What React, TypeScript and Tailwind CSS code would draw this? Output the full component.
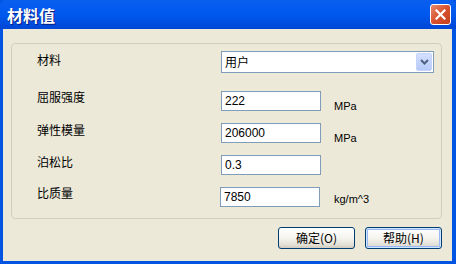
import React from 'react';

const cjk = "font-['Noto_Sans_CJK_SC',sans-serif]";
const latin = "font-['Liberation_Sans','Noto_Sans_CJK_SC',sans-serif]";

function Field({ value, shift = '' }: { value: string; shift?: string }) {
  return (
    <div className={`w-[100px] h-[20px] border border-[#7F9DB9] bg-white px-[3px] flex items-center text-[12px] text-black ${latin} ${shift}`}>
      {value}
    </div>
  );
}

function XpButton({ label, focused }: { label: string; focused?: boolean }) {
  return (
    <div
      className={`w-[77px] h-[22px] rounded-[3px] border border-[#003C74] bg-gradient-to-b from-[#FFFFFF] via-[#F5F4EF] to-[#D9D6CA] flex items-center justify-center text-[12px] text-black ${cjk} ${
        focused ? 'shadow-[inset_0_0_0_1px_#CEE7FF,inset_0_0_0_2px_#98B8F8]' : 'shadow-[inset_0_-2px_0_#D6D0C5]'
      }`}
    >
      {label}
    </div>
  );
}

export default function App() {
  return (
    <div className="w-[456px] h-[264px] flex flex-col bg-[#0054E3] overflow-hidden">
      {/* title bar */}
      <div className="h-[29px] flex items-center justify-between pl-[7px] pr-[5px] rounded-t-[6px] bg-gradient-to-b from-[#0A5FEF] via-[#0058EE] to-[#0046D5]">
        <span className={`text-white text-[16px] font-bold leading-none [text-shadow:1px_1px_0_#0A1E80] ${cjk}`}>材料值</span>
        <div className="w-[21px] h-[21px] rounded-[3px] border border-white bg-gradient-to-br from-[#E8886A] via-[#D8512F] to-[#C13E1C] flex items-center justify-center">
          <svg width="11" height="11" viewBox="0 0 11 11">
            <path d="M1.5 1.5 L9.5 9.5 M9.5 1.5 L1.5 9.5" stroke="white" strokeWidth="2.2" strokeLinecap="square" />
          </svg>
        </div>
      </div>

      {/* client area */}
      <div className="flex-1 mx-[3px] mr-[4px] mb-[3px] bg-[#ECE9D8] flex flex-col pl-[8px] pt-[14px]">
        <div className="w-[431px] h-[176px] border border-[#D0D0BF] rounded-[4px] flex flex-col pl-[25px] pt-[7px]">
          {/* 材料 */}
          <div className="flex items-start h-[22px]">
            <span className={`w-[184px] text-[12px] leading-[16px] mt-[1px] text-black ${cjk}`}>材料</span>
            <div className="w-[213px] h-[22px] border border-[#7F9DB9] bg-white flex items-center justify-between pl-[3px] pr-[1px]">
              <span className={`text-[12px] text-black ${cjk}`}>用户</span>
              <div className="w-[16px] h-[18px] rounded-[2px] bg-gradient-to-b from-[#D4E0FD] to-[#B6CBF8] border border-[#C3D3FD] flex items-center justify-center">
                <svg width="9" height="6" viewBox="0 0 9 6">
                  <path d="M1 1 L4.5 4.5 L8 1" stroke="#4D6185" strokeWidth="2" fill="none" />
                </svg>
              </div>
            </div>
          </div>

          {/* 屈服强度 */}
          <div className="flex items-start h-[20px] mt-[18px]">
            <span className={`w-[184px] text-[12px] leading-[16px] mt-[-2px] text-black ${cjk}`}>屈服强度</span>
            <Field value="222" />
            <span className={`ml-[13px] mt-[8px] text-[11px] leading-[14px] text-black ${latin}`}>MPa</span>
          </div>

          {/* 弹性模量 */}
          <div className="flex items-start h-[20px] mt-[12px]">
            <span className={`w-[184px] text-[12px] leading-[16px] mt-[-1px] text-black ${cjk}`}>弹性模量</span>
            <Field value="206000" />
            <span className={`ml-[13px] mt-[8px] text-[11px] leading-[14px] text-black ${latin}`}>MPa</span>
          </div>

          {/* 泊松比 */}
          <div className="flex items-start h-[20px] mt-[12px]">
            <span className={`w-[184px] text-[12px] leading-[16px] mt-[-1px] text-black ${cjk}`}>泊松比</span>
            <Field value="0.3" />
          </div>

          {/* 比质量 */}
          <div className="flex items-start h-[20px] mt-[12px]">
            <span className={`w-[183px] text-[12px] leading-[16px] mt-[-2px] text-black ${cjk}`}>比质量</span>
            <Field value="7850" />
            <span className={`ml-[14px] mt-[5px] text-[11px] leading-[14px] text-black ${latin}`}>kg/m^3</span>
          </div>
        </div>

        <div className="w-[431px] flex justify-end gap-[10px] mt-[8px]">
          <XpButton label="确定(O)" />
          <XpButton label="帮助(H)" focused />
        </div>
      </div>
    </div>
  );
}
